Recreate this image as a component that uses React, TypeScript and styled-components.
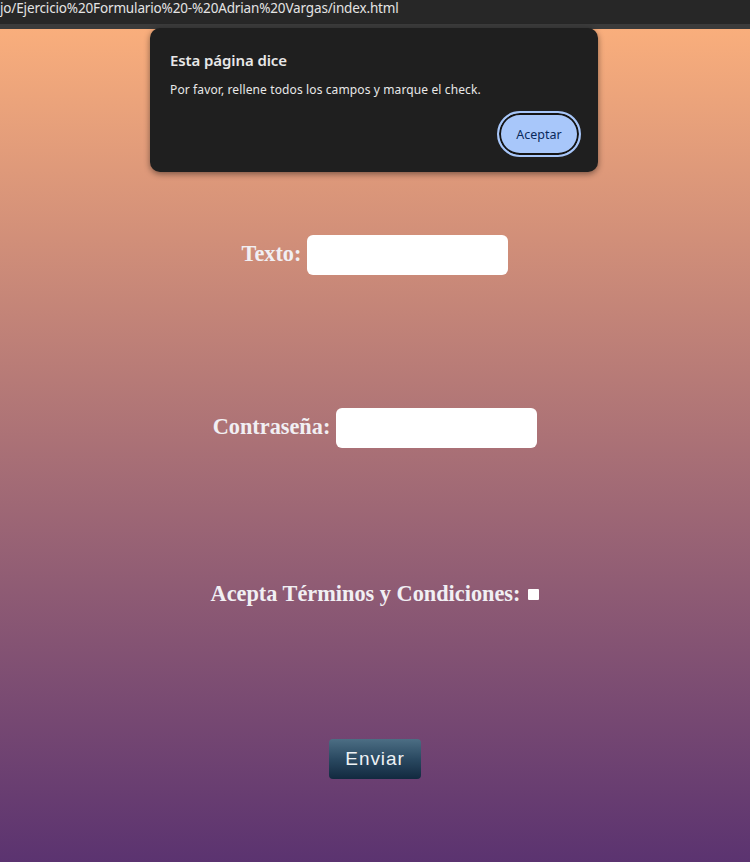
import React from "react";
import styled, { createGlobalStyle } from "styled-components";

const Global = createGlobalStyle`
  html, body { margin: 0; padding: 0; }
  body { width: 750px; height: 862px; overflow: hidden; background: #272727; }
  * { box-sizing: border-box; }
`;

const Shell = styled.div`
  position: relative;
  width: 750px;
  height: 862px;
  display: flex;
  flex-direction: column;
`;

const AddressBar = styled.div`
  background: #272727;
  color: #e4e4e4;
  font-family: "Noto Sans", "Open Sans", sans-serif;
  font-size: 13.5px;
  letter-spacing: -0.15px;
  white-space: nowrap;
  overflow: hidden;
  margin-top: -6px;
  height: 30px;
  line-height: 28px;
`;

const Strip = styled.div`
  height: 5px;
  background: #3b3b3b;
`;

const Page = styled.main`
  flex: 1;
  background: linear-gradient(to bottom, #f9ae7c 0%, #5b3370 100%);
  display: flex;
  flex-direction: column;
  align-items: center;
  padding-top: 206px;
  gap: 133px;
`;

const Row = styled.div<{ $gap?: number }>`
  display: flex;
  align-items: center;
  gap: ${(p) => p.$gap ?? 6}px;
`;

const Label = styled.label<{ $lift?: number }>`
  font-family: "Liberation Serif", "Times New Roman", serif;
  font-weight: bold;
  font-size: 22.3px;
  line-height: 25px;
  color: #f1eff3;
  margin-bottom: ${(p) => p.$lift ?? 0}px;
`;

const Input = styled.input`
  width: 201px;
  height: 40px;
  border: none;
  border-radius: 6px;
  background: #ffffff;
  outline: none;
  padding: 0 8px;
`;

const Check = styled.span`
  display: inline-block;
  width: 11px;
  height: 11px;
  background: #ffffff;
  border-radius: 1px;
  margin-top: 1px;
`;

const Submit = styled.button`
  width: 92px;
  height: 40px;
  border: none;
  border-radius: 4px;
  background: linear-gradient(to bottom, #4c6e84 0%, #2a4961 50%, #12293f 100%);
  color: #eef2f5;
  font-family: "Liberation Sans", Arial, sans-serif;
  font-size: 19px;
  letter-spacing: 0.9px;
  cursor: pointer;
`;

const Dialog = styled.div`
  position: absolute;
  top: 28px;
  left: 150px;
  width: 448px;
  height: 144px;
  background: #1f1f1f;
  border-radius: 10px;
  box-shadow: 0 2px 6px rgba(0, 0, 0, 0.45);
  padding: 22px 17px 15px 20px;
  display: flex;
  flex-direction: column;
  font-family: "Noto Sans", "Open Sans", sans-serif;
  color: #e8e8e8;
`;

const Title = styled.div`
  font-size: 15px;
  font-weight: 600;
  line-height: 20px;
  letter-spacing: -0.1px;
`;

const Message = styled.div`
  margin-top: 12px;
  font-size: 12px;
  line-height: 16px;
  letter-spacing: 0.12px;
`;

const Actions = styled.div`
  margin-top: auto;
  display: flex;
  justify-content: flex-end;
`;

const Accept = styled.button`
  width: 84px;
  height: 46px;
  border-radius: 23px;
  border: 2px solid #a8c7fa;
  box-shadow: inset 0 0 0 2px #141414;
  background: #a8c7fa;
  color: #0a2a5c;
  font-family: "Noto Sans", "Open Sans", sans-serif;
  font-size: 12.5px;
  letter-spacing: 0px;
  cursor: pointer;
`;

export default function App() {
  return (
    <>
      <Global />
      <Shell>
        <AddressBar>jo/Ejercicio%20Formulario%20-%20Adrian%20Vargas/index.html</AddressBar>
        <Strip />
        <Page>
          <Row>
            <Label htmlFor="texto" $lift={4}>Texto:</Label>
            <Input id="texto" type="text" />
          </Row>
          <Row>
            <Label htmlFor="pass" $lift={4}>Contraseña:</Label>
            <Input id="pass" type="password" />
          </Row>
          <Row $gap={8}>
            <Label>Acepta Términos y Condiciones:</Label>
            <Check />
          </Row>
          <Submit>Enviar</Submit>
        </Page>
        <Dialog>
          <Title>Esta página dice</Title>
          <Message>Por favor, rellene todos los campos y marque el check.</Message>
          <Actions>
            <Accept>Aceptar</Accept>
          </Actions>
        </Dialog>
      </Shell>
    </>
  );
}
